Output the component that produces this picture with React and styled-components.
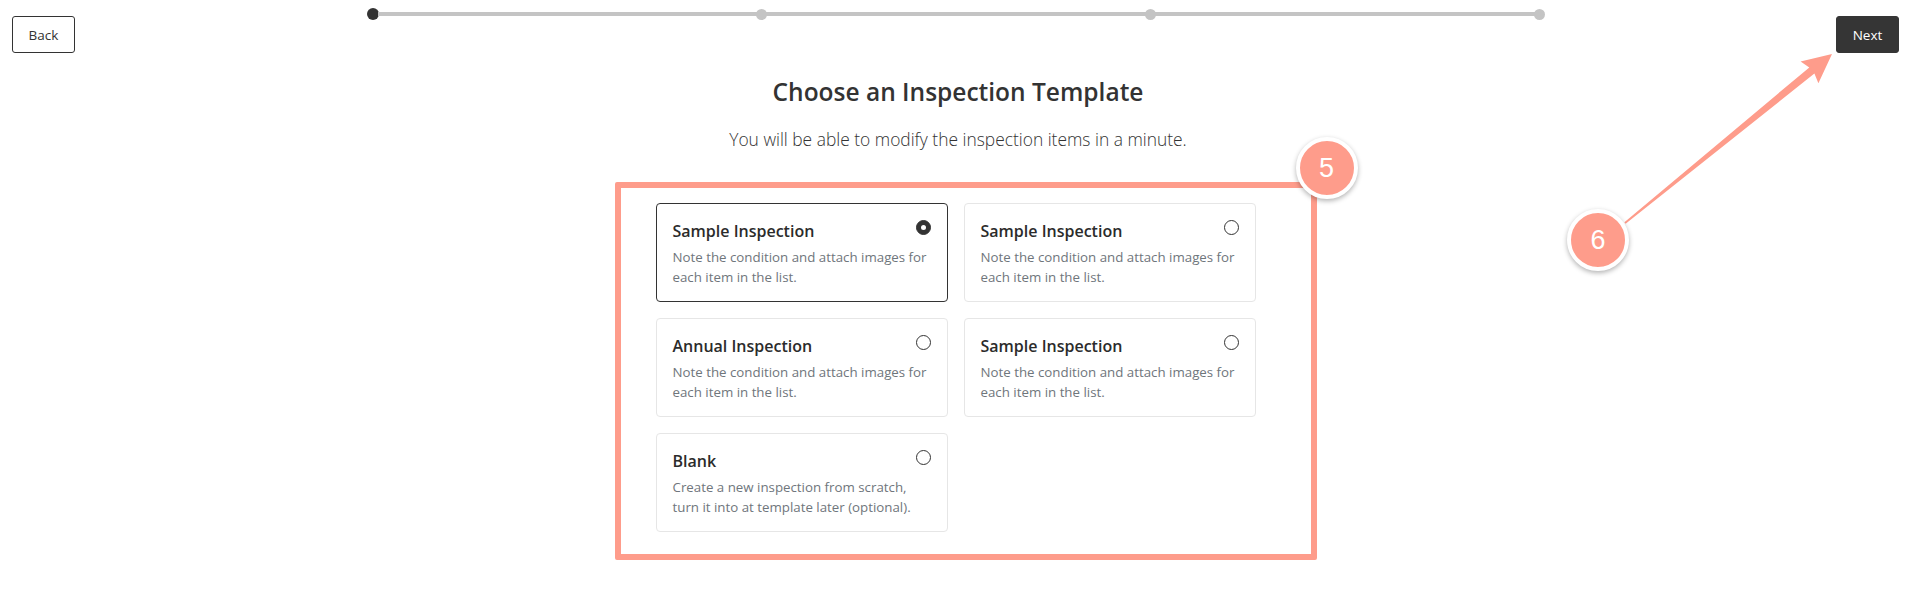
import React, { useState } from 'react'
import styled, { createGlobalStyle } from 'styled-components'

const GlobalStyle = createGlobalStyle`
    * { box-sizing: border-box; }
    body {
        margin: 0;
        background: #ffffff;
        font-family: "Open Sans", "Noto Sans", sans-serif;
        color: #333333;
    }
`;

const templates = [
    { title: 'Sample Inspection', text: 'Note the condition and attach images for each item in the list.' },
    { title: 'Sample Inspection', text: 'Note the condition and attach images for each item in the list.' },
    { title: 'Annual Inspection', text: 'Note the condition and attach images for each item in the list.' },
    { title: 'Sample Inspection', text: 'Note the condition and attach images for each item in the list.' },
    { title: 'Blank', text: 'Create a new inspection from scratch, turn it into at template later (optional).' },
];

function App() {
    const [selected, setSelected] = useState(0);

    return (
        <>
        <GlobalStyle />
        <Page>
            <TopBar>
                <BackButton>Back</BackButton>
                <Stepper>
                    <Dot $active />
                    <Track />
                    <Dot />
                    <Track />
                    <Dot />
                    <Track />
                    <Dot />
                </Stepper>
                <NextButton>Next</NextButton>
            </TopBar>

            <Main>
                <Title>Choose an Inspection Template</Title>
                <Subtitle>You will be able to modify the inspection items in a minute.</Subtitle>

                <GridWrap>
                    <CardGrid>
                        {templates.map((t, index) => (
                            <Card
                                key={index}
                                $selected={index === selected}
                                onClick={() => setSelected(index)}
                            >
                                <CardHead>
                                    <CardTitle>{t.title}</CardTitle>
                                    <Radio $checked={index === selected} />
                                </CardHead>
                                <CardText>{t.text}</CardText>
                            </Card>
                        ))}
                    </CardGrid>
                    <Highlight />
                    <Badge $x={640} $y={-66}>5</Badge>
                </GridWrap>
            </Main>

            <Overlay width="1916" height="609" viewBox="0 0 1916 609">
                <polygon
                    fill="#fe9c8b"
                    points="1624.4,222.2 1809.3,67.4 1800.6,61.6 1832,54 1818.4,83.3 1814.4,73.6 1625.6,223.8"
                />
            </Overlay>
            <Badge $x={1567} $y={209}>6</Badge>
        </Page>
        </>
    );
}

const Page = styled.div`
    position: relative;
    width: 1916px;
    height: 609px;
    overflow: hidden;
`;

const TopBar = styled.div`
    display: grid;
    grid-template-columns: 1fr auto 1fr;
    align-items: start;
    padding: 8px 17px 0 12px;
`;

const ButtonBase = styled.button`
    height: 37px;
    margin-top: 8px;
    padding: 0;
    border-radius: 3px;
    font-family: "Open Sans", sans-serif;
    font-size: 13.5px;
    cursor: pointer;
`;

const BackButton = styled(ButtonBase)`
    justify-self: start;
    width: 63px;
    background: #ffffff;
    border: 1px solid #333333;
    color: #333333;
`;

const NextButton = styled(ButtonBase)`
    justify-self: end;
    width: 63px;
    background: #353535;
    border: 1px solid #353535;
    color: #ffffff;
`;

const Stepper = styled.div`
    display: flex;
    align-items: center;
    width: 1178px;
    height: 12px;
`;

const Dot = styled.span`
    width: ${p => (p.$active ? '12px' : '11px')};
    height: ${p => (p.$active ? '12px' : '11px')};
    border-radius: 50%;
    background: ${p => (p.$active ? '#333333' : '#c4c4c4')};
    flex-shrink: 0;
`;

const Track = styled.span`
    flex: 1;
    height: 4px;
    background: #c4c4c4;
    margin: 0 -1px;
`;

const Main = styled.div`
    display: flex;
    flex-direction: column;
    align-items: center;
`;

const Title = styled.h1`
    margin: 23px 0 0;
    font-size: 24.5px;
    line-height: 32px;
    font-weight: 600;
    color: #333333;
`;

const Subtitle = styled.p`
    margin: 19px 0 0;
    font-size: 17.4px;
    line-height: 24px;
    font-weight: 300;
    color: #333333;
`;

const GridWrap = styled.div`
    position: relative;
    margin: 52px 0 0 -5px;
`;

const CardGrid = styled.div`
    display: grid;
    grid-template-columns: 292px 292px;
    gap: 16px;
`;

const Card = styled.div`
    height: 99px;
    padding: 16px 16px 14px;
    border: 1px solid ${p => (p.$selected ? '#333333' : '#e6e6e6')};
    border-radius: 4px;
    background: #ffffff;
    cursor: pointer;
`;

const CardHead = styled.div`
    display: flex;
    justify-content: space-between;
    align-items: flex-start;
    margin-top: -1px;
`;

const CardTitle = styled.h3`
    margin: 0;
    font-size: 16px;
    line-height: 24px;
    font-weight: 600;
    color: #2b2b2b;
`;

const Radio = styled.span`
    position: relative;
    width: 15px;
    height: 15px;
    margin-top: 1px;
    border-radius: 50%;
    border: 1.4px solid #333333;
    background: ${p => (p.$checked ? '#333333' : '#ffffff')};
    &::after {
        content: '';
        display: ${p => (p.$checked ? 'block' : 'none')};
        position: absolute;
        left: 50%;
        top: 50%;
        width: 5px;
        height: 5px;
        margin: -2.5px 0 0 -2.5px;
        border-radius: 50%;
        background: #ffffff;
    }
`;

const CardText = styled.p`
    margin: 4px 0 0;
    font-size: 13.3px;
    line-height: 20px;
    color: #6f767c;
`;

const Highlight = styled.div`
    position: absolute;
    left: -41px;
    top: -21px;
    right: -61px;
    bottom: -28px;
    border: 6px solid #fe9c8b;
    border-radius: 2px;
    pointer-events: none;
`;

const Badge = styled.div`
    position: absolute;
    left: ${p => p.$x}px;
    top: ${p => p.$y}px;
    width: 62px;
    height: 62px;
    display: flex;
    align-items: center;
    justify-content: center;
    border-radius: 50%;
    border: 4px solid #ffffff;
    background: #fe9c8b;
    box-shadow: 0 2px 5px rgba(0, 0, 0, 0.3);
    color: #ffffff;
    font-family: "Liberation Sans", Arial, sans-serif;
    font-size: 27px;
`;

const Overlay = styled.svg`
    position: absolute;
    left: 0;
    top: 0;
    pointer-events: none;
`;

export default App
